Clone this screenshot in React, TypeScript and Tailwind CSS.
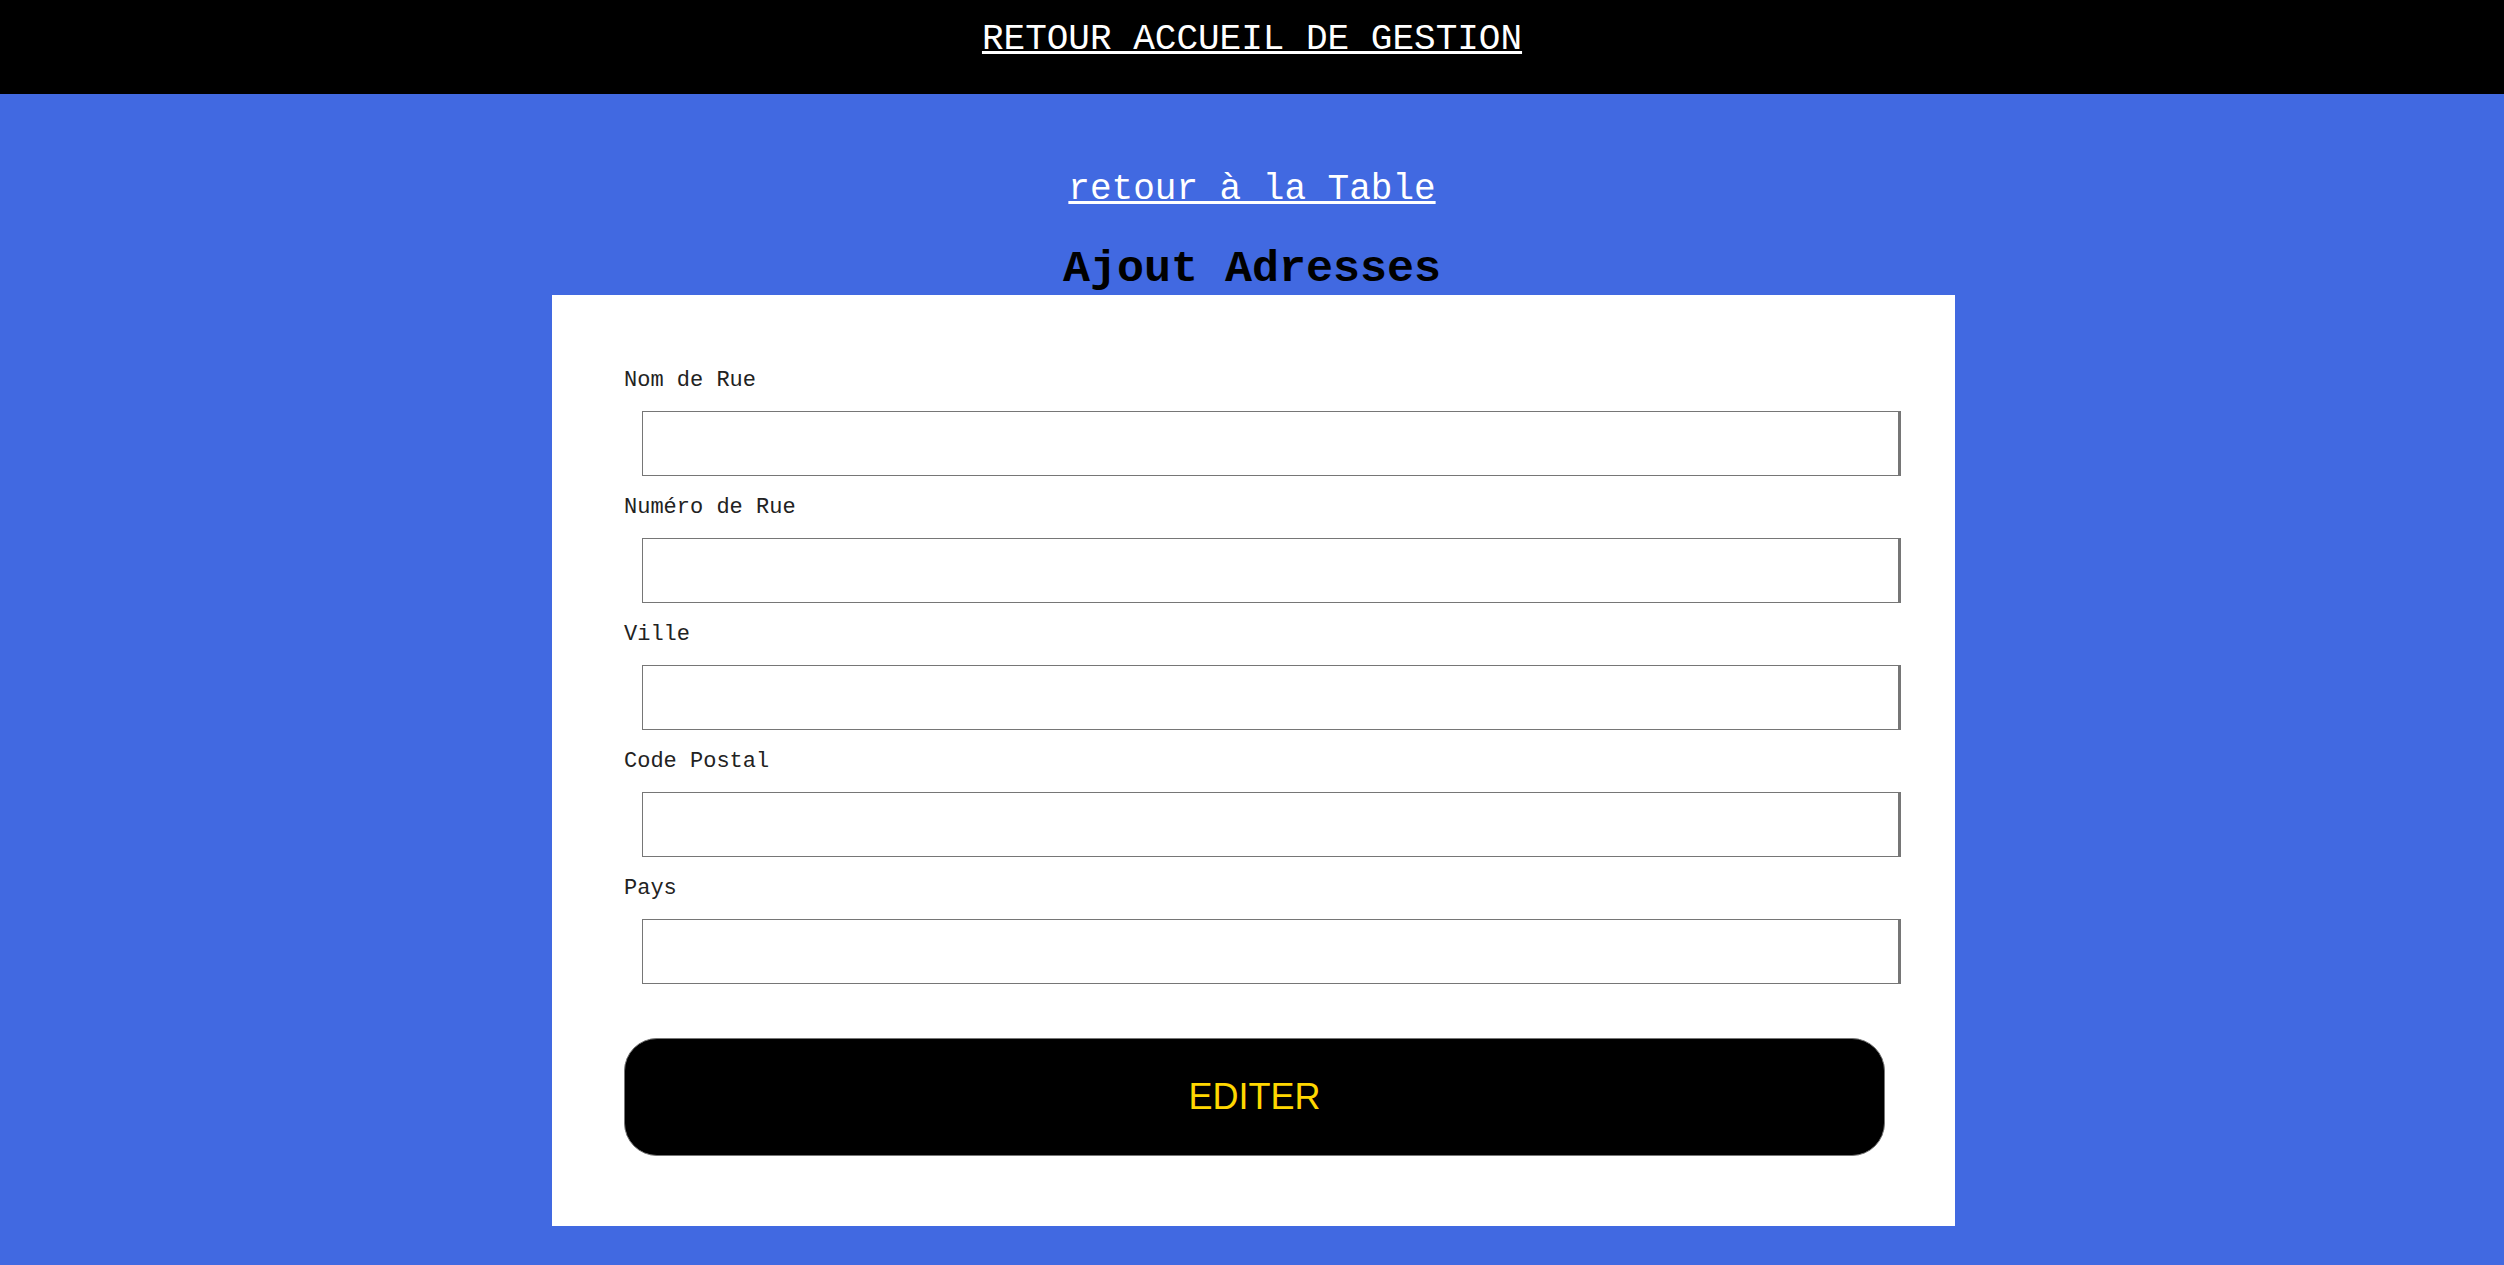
const fields = ['Nom de Rue', 'Numéro de Rue', 'Ville', 'Code Postal', 'Pays']

export default function App() {
  return (
    <div className="min-h-screen bg-[#4169e1] font-['Liberation_Mono',monospace]">
      {/* barre du haut */}
      <div className="h-[94px] bg-black pt-[22px] text-center">
        <a href="#" className="text-[36px] leading-none text-white underline">
          RETOUR ACCUEIL DE GESTION
        </a>
      </div>

      <div className="mt-[78px] text-center">
        <a href="#" className="text-[36px] leading-none text-white underline">
          retour à la Table
        </a>
      </div>

      <h1 className="mt-[39px] text-center text-[45px] font-bold leading-none text-black">
        Ajout Adresses
      </h1>

      <form className="ml-[552px] mt-[3px] w-[1403px] bg-white pl-[72px] pt-[75px] pb-[70px]">
        {fields.map((f) => (
          <div key={f} className="mb-[21px]">
            <label className="mb-[19px] block h-[22px] text-[22px] leading-none text-[#222]">
              {f}
            </label>
            <input
              type="text"
              className="ml-[18px] block h-[65px] w-[1259px] border border-r-[3px] border-[#767676] bg-white outline-none"
            />
          </div>
        ))}
        <button
          type="button"
          className="mt-[33px] h-[118px] w-[1261px] rounded-[33px] border border-[#767676] bg-black font-['Liberation_Sans',Arial,sans-serif] text-[36px] text-[#ffd700]"
        >
          EDITER
        </button>
      </form>
    </div>
  )
}
